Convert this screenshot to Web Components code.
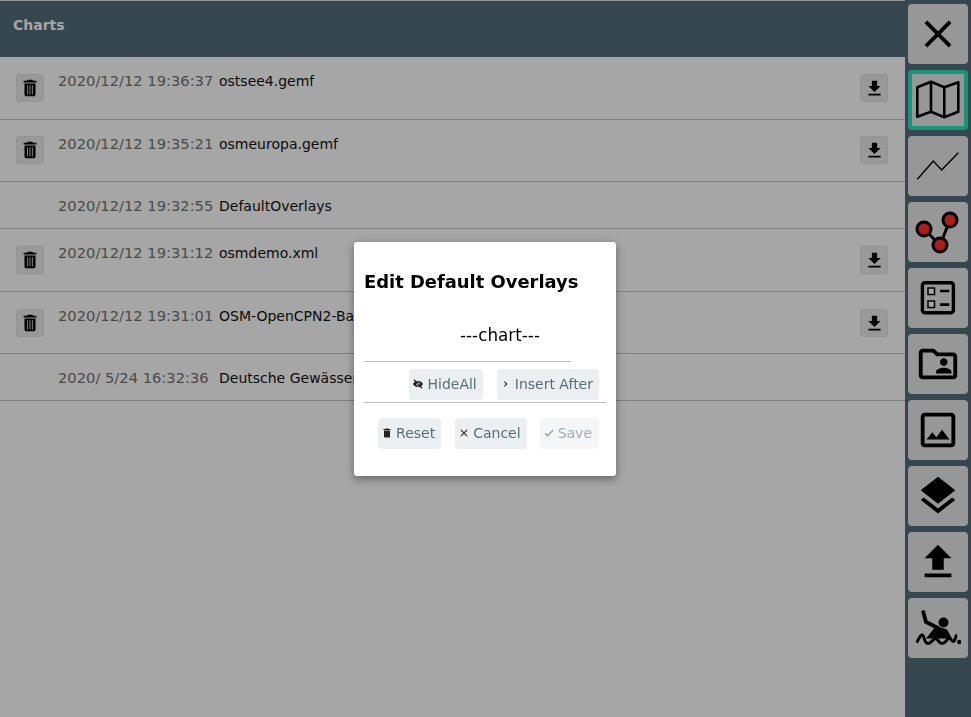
<!DOCTYPE html>
<html>
<head>
<meta charset="utf-8">
<title>Charts</title>
<style>
  html, body { margin: 0; height: 100%; overflow: hidden; }
  body { font-family: "DejaVu Sans", sans-serif; background: #a6a6a6; }
</style>
</head>
<body>
<charts-page>
  <chart-row slot="rows" h="63" date="2020/12/12 19:36:37" name="ostsee4.gemf" actions></chart-row>
  <chart-row slot="rows" h="62" btn-top="2" date="2020/12/12 19:35:21" name="osmeuropa.gemf" actions></chart-row>
  <chart-row slot="rows" h="47" date="2020/12/12 19:32:55" name="DefaultOverlays"></chart-row>
  <chart-row slot="rows" h="63" date="2020/12/12 19:31:12" name="osmdemo.xml" actions></chart-row>
  <chart-row slot="rows" h="62" date="2020/12/12 19:31:01" name="OSM-OpenCPN2-Base.gemf" actions></chart-row>
  <chart-row slot="rows" h="47" date="2020/ 5/24 16:32:36" name="Deutsche Gewässer.gemf"></chart-row>
  <side-bar slot="side"></side-bar>
</charts-page>
<overlay-dialog></overlay-dialog>

<script>
const ICONS = {
  trash: '<path d="M6 19c0 1.1.9 2 2 2h8c1.1 0 2-.9 2-2V7H6v12zM19 4h-3.500l-1-1h-5l-1 1H5v2h14V4z"/>',
  trashLined: '<path d="M6 19c0 1.1.9 2 2 2h8c1.1 0 2-.9 2-2V7H6v12zM19 4h-3.500l-1-1h-5l-1 1H5v2h14V4z"/><path d="M9.400 9v10M12 9v10M14.600 9v10" stroke="#a0a0a0" stroke-width=".9"/>',
  download: '<path d="M19 9h-4V3H9v6H5l7 7 7-7zM5 18v2h14v-2H5z"/>',
  close: '<path d="M19 6.41L17.59 5 12 10.59 6.41 5 5 6.41 10.59 12 5 17.59 6.41 19 12 13.41 17.59 19 19 17.59 13.41 12z"/>',
  folder: '<path d="M20 6h-8l-2-2H4c-1.1 0-1.99.9-1.99 2L2 18c0 1.1.9 2 2 2h16c1.1 0 2-.9 2-2V8c0-1.1-.9-2-2-2zm0 12H4V6h5.17l2 2H20v10zm-5-5c1.1 0 2-.9 2-2s-.9-2-2-2-2 .9-2 2 .9 2 2 2zm-4 4h8v-1c0-1.33-2.67-2-4-2s-4 .67-4 2v1z"/>',
  image: '<path d="M19 5v14H5V5h14m0-2H5c-1.1 0-2 .9-2 2v14c0 1.1.9 2 2 2h14c1.1 0 2-.9 2-2V5c0-1.1-.9-2-2-2zm-4.86 8.86l-3 3.87L9 13.14 6 17h12l-3.86-5.14z"/>',
  layers: '<path d="M11.99 18.54l-7.37-5.73L3 14.07l9 7 9-7-1.63-1.27-7.38 5.74zM12 16l7.36-5.73L21 9l-9-7-9 7 1.63 1.27L12 16z"/>',
  upload: '<path d="M9 16h6v-6h4l-7-7-7 7h4zm-4 2h14v2H5z"/>',
  eyeOff: '<path d="M12 6c-4.500 0-8.300 2.500-10 6 1.700 3.500 5.500 6 10 6s8.300-2.500 10-6c-1.700-3.500-5.500-6-10-6zm0 9.500a3.500 3.500 0 1 1 0-7 3.500 3.500 0 0 1 0 7z"/><path d="M4 3.500l16 17" stroke="currentColor" stroke-width="2.500"/>',
  chevron: '<path d="M9.500 6.500L8 8l4 4-4 4 1.500 1.500L15 12z"/>',
  check: '<path d="M9 16.200L4.800 12l-1.400 1.400L9 19 21 7l-1.400-1.400z"/>'
};

function svg(name, size) {
  return `<svg width="${size}" height="${size}" viewBox="0 0 24 24" fill="currentColor">${ICONS[name]}</svg>`;
}

// Page frame: header, list and the button column on the right
class ChartsPage extends HTMLElement {
  constructor() {
    super();
    this.attachShadow({ mode: 'open' });
    this.shadowRoot.innerHTML = `
      <style>
        :host { display: flex; height: 717px; }
        .main { flex: 1; min-width: 0; display: flex; flex-direction: column; }
        .header {
          height: 57px;
          box-sizing: border-box;
          border-top: 1px solid #8d9498;
          background: #37474f;
          color: #a6a6a6;
          font-weight: 700;
          font-size: 14px;
          line-height: 20px;
          padding: 14px 13px 0;
        }
      </style>
      <div class="main">
        <div class="header">Charts</div>
        <slot name="rows"></slot>
      </div>
      <slot name="side"></slot>
    `;
  }
}

// One line of the chart list
class ChartRow extends HTMLElement {
  constructor() {
    super();
    this.attachShadow({ mode: 'open' });
  }

  connectedCallback() {
    const actions = this.hasAttribute('actions');
    this.shadowRoot.innerHTML = `
      <style>
        :host {
          display: flex;
          align-items: flex-start;
          box-sizing: border-box;
          height: ${this.getAttribute('h')}px;
          border-bottom: 1px solid #7f7f7f;
          padding: 14px 17px 0 16px;
          font-size: 14px;
          line-height: 20px;
          color: #0b0b0b;
        }
        .btn {
          width: 28px;
          height: 28px;
          margin-top: ${this.getAttribute('btn-top') || 3}px;
          box-sizing: border-box;
          background: #999;
          border: 1px solid #949494;
          border-radius: 3px;
          display: flex;
          align-items: center;
          justify-content: center;
          color: #000;
          flex: none;
        }
        .left { width: 42px; flex: none; }
        .date { color: #4a4a4a; width: 161px; flex: none; font-size: 14.7px; white-space: pre; }
        .name { flex: 1; white-space: nowrap; }
      </style>
      <div class="left">${actions ? `<div class="btn">${svg('trashLined', 22)}</div>` : ''}</div>
      <span class="date">${this.getAttribute('date')}</span>
      <span class="name">${this.getAttribute('name')}</span>
      ${actions ? `<div class="btn">${svg('download', 21)}</div>` : ''}
    `;
  }
}

// Right hand column of big buttons
class SideBar extends HTMLElement {
  constructor() {
    super();
    this.attachShadow({ mode: 'open' });
    const big = inner => `<svg width="46" height="46" viewBox="0 0 46 46" fill="none">${inner}</svg>`;
    const mat = name => svg(name, 46);
    const items = [
      mat('close'),
      big('<path d="M2.300 10.300L16 4.700 29.300 10.300 43.300 5.300V34.700L29.300 40.300 16 34.700 2.300 39.700ZM16 4.700V34.700M29.300 10.300V40.300" stroke="#000" stroke-width="2.600" stroke-linejoin="round"/>'),
      big('<path d="M2.300 36.300L18.300 18 26.700 27 43.300 9.700" stroke="#000" stroke-width="1.500"/>'),
      big('<path d="M9 20L25 36 35 11" stroke="#000" stroke-width="3"/><g fill="#ad1c1c" stroke="#000" stroke-width="3"><circle cx="9" cy="20" r="7"/><circle cx="35" cy="11" r="7"/><circle cx="25" cy="36" r="7"/></g>'),
      big('<rect x="7.400" y="7.700" width="31" height="30" rx="2.500" stroke="#000" stroke-width="3.400"/><rect x="13" y="13" width="6.500" height="6.500" stroke="#000" stroke-width="1.500" fill="#a8a8a8"/><rect x="13" y="26" width="6.500" height="6.500" stroke="#000" stroke-width="1.500" fill="#a8a8a8"/><path d="M25 14.700H34.300V17.300H25zM25 28.300H34.300V31H25z" fill="#000"/>'),
      mat('folder'),
      mat('image'),
      mat('layers'),
      mat('upload'),
      big('<path d="M8.300 7L11 17 23 23" stroke="#000" stroke-width="3.800" stroke-linecap="round"/><path d="M21 21L32 24.500 37 33.500H11Z" fill="#000"/><circle cx="28.500" cy="17.500" r="5" fill="#000"/><path d="M1.500 37.500C3.500 36 4.500 29.500 7.500 30 9.500 31 9 38.500 13 38.500 17 38.500 18 33.500 20.500 33.500 23 33.500 23.500 38.500 27 38.500 31 38.500 31.500 33.500 34 33.500 36.500 33.500 37.500 38.500 39.500 35.500 40.500 34 40.500 30.500 42 30" stroke="#000" stroke-width="3"/><circle cx="44.300" cy="37" r="2.200" fill="#000"/>')
    ];
    this.shadowRoot.innerHTML = `
      <style>
        :host {
          display: flex;
          flex-direction: column;
          gap: 6px;
          width: 66px;
          box-sizing: border-box;
          padding: 4px 3px 0 3px;
          background: #37474f;
          flex: none;
        }
        .b {
          width: 60px;
          height: 60px;
          box-sizing: border-box;
          background: #979797;
          border-radius: 4px;
          display: flex;
          align-items: center;
          justify-content: center;
          color: #000;
        }
        .b.on { border: 4px solid #149678; }
      </style>
      ${items.map((it, i) => `<div class="b${i === 1 ? ' on' : ''}">${it}</div>`).join('')}
    `;
  }
}

// Small button inside the dialog
class DialogButton extends HTMLElement {
  constructor() {
    super();
    this.attachShadow({ mode: 'open' });
  }

  connectedCallback() {
    this.shadowRoot.innerHTML = `
      <style>
        :host {
          display: inline-flex;
          align-items: center;
          gap: 3px;
          height: 31px;
          box-sizing: border-box;
          padding: 0 6px 0 3px;
          border-radius: 4px;
          background: #eceff1;
          color: #546e7a;
          font-size: 14px;
          white-space: nowrap;
        }
        :host([disabled]) { opacity: .55; padding-right: 7px; margin-left: -1px; }
        svg { color: #222; flex: none; }
      </style>
      ${svg(this.getAttribute('icon'), 12)}<slot></slot>
    `;
  }
}

// Modal box, centred over the whole window
class OverlayDialog extends HTMLElement {
  constructor() {
    super();
    this.attachShadow({ mode: 'open' });
    this.shadowRoot.innerHTML = `
      <style>
        :host {
          position: fixed;
          inset: 0;
          display: flex;
          align-items: center;
          justify-content: center;
        }
        .box {
          width: 262px;
          height: 234px;
          margin-right: 1px;
          box-sizing: border-box;
          padding: 0 10px;
          background: #fff;
          border-radius: 3px;
          box-shadow: 0 3px 8px rgba(0,0,0,.4);
          color: #000;
        }
        h2 { margin: 0; padding-top: 28px; font-size: 17.92px; line-height: 24px; font-weight: 700; }
        .item {
          width: 207px;
          height: 51px;
          margin-top: 17px;
          box-sizing: border-box;
          border-bottom: 1px solid #bdbdbd;
          padding: 14px 0 0 96px;
          line-height: 20px;
          font-size: 16.8px;
          white-space: nowrap;
        }
        .row {
          display: flex;
          justify-content: flex-end;
          gap: 14px;
          padding-right: 7px;
        }
        .r1 { height: 41px; padding-top: 7px; box-sizing: border-box; border-bottom: 1px solid #bdbdbd; }
        .r2 { margin-top: 15px; }
      </style>
      <div class="box">
        <h2>Edit Default Overlays</h2>
        <div class="item">---chart---</div>
        <div class="row r1">
          <dialog-button icon="eyeOff">HideAll</dialog-button>
          <dialog-button icon="chevron">Insert After</dialog-button>
        </div>
        <div class="row r2">
          <dialog-button icon="trash">Reset</dialog-button>
          <dialog-button icon="close">Cancel</dialog-button>
          <dialog-button icon="check" disabled>Save</dialog-button>
        </div>
      </div>
    `;
  }
}

customElements.define('dialog-button', DialogButton);
customElements.define('charts-page', ChartsPage);
customElements.define('chart-row', ChartRow);
customElements.define('side-bar', SideBar);
customElements.define('overlay-dialog', OverlayDialog);
</script>
</body>
</html>
